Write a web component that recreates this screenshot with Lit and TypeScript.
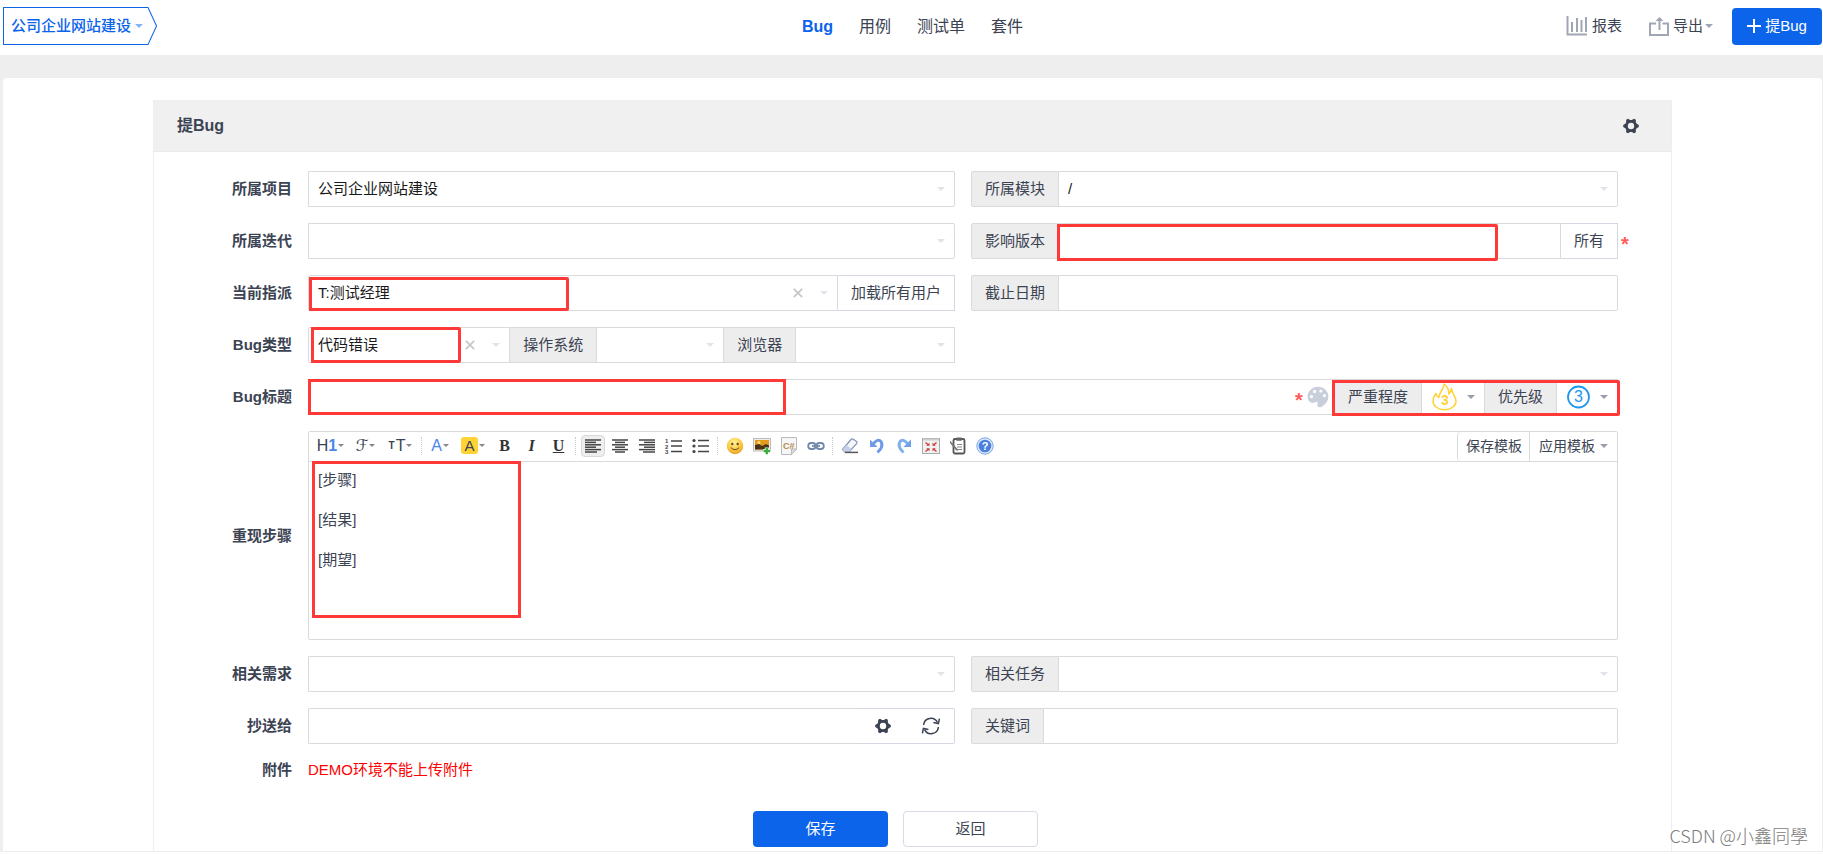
import { LitElement, html, css, svg } from "lit";
import { customElement } from "lit/decorators.js";

const gear = html`<svg class="ico" width="16" height="16" viewBox="0 0 16 16" aria-hidden="true">
  <circle cx="8" cy="8" r="4.6" fill="none" stroke="currentColor" stroke-width="2.8" />
  <g fill="currentColor">
    ${[0, 60, 120, 180, 240, 300].map(
      (a) => svg`<path d="M12 4.800 15.800 6.900V9.100L12 11.200Z" transform="rotate(${a} 8 8)"/>`
    )}
  </g>
</svg>`;

const refresh = html`<svg class="ico" width="20" height="18" viewBox="0 0 20 18" fill="none" stroke="currentColor" stroke-width="1.5" aria-hidden="true">
  <path d="M2.6 8A7.3 7.3 0 0 1 16.4 5.4M17.4 10A7.3 7.3 0 0 1 3.6 12.6" />
  <path d="M18.4 1.6 17.4 6.6 12.4 5.6M1.4 16.4 2.4 11.4 7.4 12.4" />
</svg>`;

const chart = html`<svg class="ico" width="22" height="20" viewBox="0 0 22 20" fill="none" stroke="#a0a6b3" stroke-width="2" aria-hidden="true">
  <path d="M1.5 0V18.5H21" /><path d="M6 6V16M11 2V16M15.500 4V16M20 1V16" />
</svg>`;

const share = html`<svg class="ico" width="20" height="20" viewBox="0 0 20 20" fill="none" stroke="#a0a6b3" stroke-width="2" aria-hidden="true">
  <path d="M7 7.500H1V19H19V7.500H13.500" /><path d="M10.500 14V2" /><path d="M6.500 5 10.500 1 14.500 5Z" fill="#a0a6b3" stroke="none" />
</svg>`;

const palette = html`<svg class="ico" width="22" height="22" viewBox="0 0 22 22" aria-hidden="true">
  <path fill="#c9cedb" d="M11 .8C5 .8.6 5.200.6 10.800c0 3.600 2.600 6.200 5.200 6.200 1.700 0 2.600-1.800 4.200-1.200 1.700.7-.6 3 .8 4.800.9 1.200 3 .9 5-.7 3.400-2.500 5.600-5.400 5.600-9.100C21.400 5.200 17 .8 11 .8z" />
  <g fill="#fff"><circle cx="4.500" cy="10.600" r="1.600" /><circle cx="7.600" cy="5.400" r="1.600" /><circle cx="13.800" cy="5" r="1.600" /><circle cx="17.400" cy="9.600" r="1.600" /></g>
</svg>`;

const flame = html`<svg class="badge" width="25" height="28" viewBox="0 0 25 28" fill="none" stroke="#ffd335" stroke-width="1.500" stroke-linejoin="round" aria-hidden="true">
  <path d="M4 10.500C1.800 13 1 15.500 1 18 1 23 6 26.800 12.500 26.800S24 23 24 18C24 13 20 11.500 19.500 5.500 18.800 8.500 18 9.800 16.800 11 17 7 15 3 12 1 12.500 6 7.500 8 6.800 14.500 5 13.500 4.200 12.500 4 10.500Z" />
</svg>`;
const ring = html`<svg class="badge" width="25" height="28" viewBox="0 0 25 28" aria-hidden="true">
  <circle cx="12.500" cy="14" r="10.500" fill="none" stroke="#2098ee" stroke-width="1.800" />
</svg>`;

const lines = (rows: number[][]) => html`<svg width="16" height="14" viewBox="0 0 16 14" stroke="#444" stroke-width="1.500" aria-hidden="true">
  ${rows.map(([a, b], i) => svg`<path d="M${a} ${1 + i * 2.4}H${b}"/>`)}
</svg>`;
const alignLeft = lines([[0, 16], [0, 11], [0, 16], [0, 11], [0, 16], [0, 12]]);
const alignCenter = lines([[0, 16], [3, 13], [0, 16], [3, 13], [0, 16], [3, 13]]);
const alignRight = lines([[0, 16], [5, 16], [0, 16], [5, 16], [0, 16], [4, 16]]);
const listOl = html`<svg width="17" height="16" viewBox="0 0 17 16" aria-hidden="true">
  <path d="M6 3H17M6 8H17M6 13.500H17" stroke="#444" stroke-width="1.600" />
  <g font-family="Liberation Sans" font-size="6" font-weight="700" fill="#444"><text x="0" y="5">1</text><text x="0" y="10.500">2</text><text x="0" y="16">3</text></g>
</svg>`;
const listUl = html`<svg width="17" height="16" viewBox="0 0 17 16" fill="#444" aria-hidden="true">
  <path d="M6 2.500H17M6 8H17M6 13.500H17" stroke="#444" stroke-width="1.600" />
  <circle cx="2" cy="2.500" r="1.600" /><circle cx="2" cy="8" r="1.600" /><circle cx="2" cy="13.500" r="1.600" />
</svg>`;
const smile = html`<svg width="18" height="18" viewBox="0 0 18 18" aria-hidden="true">
  <defs><radialGradient id="face" cx=".45" cy=".3" r=".75"><stop offset="0" stop-color="#fff3a0" /><stop offset=".6" stop-color="#fbc73c" /><stop offset="1" stop-color="#e0982a" /></radialGradient></defs>
  <circle cx="9" cy="9" r="8.200" fill="url(#face)" /><circle cx="6.300" cy="7" r="1.200" fill="#6b4a1a" /><circle cx="11.700" cy="7" r="1.200" fill="#6b4a1a" />
  <path d="M4.800 10.500q4.200 4.400 8.400 0" fill="none" stroke="#6b4a1a" />
</svg>`;
const picture = html`<svg width="18" height="18" viewBox="0 0 18 18" aria-hidden="true">
  <rect x=".5" y="1.500" width="17" height="12.500" fill="#eee" stroke="#bbb" /><rect x="2" y="3" width="14" height="9.500" fill="#e39a1d" />
  <path d="M2 12.500V8l4-1 3 2 4-2 3 1.500v4z" fill="#4a3417" /><circle cx="6" cy="5.600" r="1.500" fill="#ffe27a" />
  <path d="M13.800 10.500v7M10.300 14h7" stroke="#fff" stroke-width="4" /><path d="M13.800 10.800v6.400M10.600 14H17" stroke="#3cae3c" stroke-width="2.400" />
</svg>`;
const code = html`<svg width="18" height="18" viewBox="0 0 18 18" aria-hidden="true">
  <path d="M1.500.5h15v11.500l-5 5.500h-10z" fill="#f6f6f6" stroke="#bbb" /><path d="M16.500 12h-5v5.500z" fill="#ddd" stroke="#bbb" />
  <text x="3" y="12" font-family="Liberation Sans" font-size="9" font-weight="700" fill="#b98a4e">C#</text>
</svg>`;
const chain = html`<svg width="18" height="18" viewBox="0 0 18 18" fill="none" stroke="#7189ad" stroke-width="1.800" aria-hidden="true">
  <rect x="1.200" y="6" width="7.400" height="6" rx="3" /><rect x="9.400" y="6" width="7.400" height="6" rx="3" /><path d="M5 9h8" />
</svg>`;
const eraser = html`<svg width="18" height="18" viewBox="0 0 18 18" aria-hidden="true">
  <path d="M1.500 12.500 10 2.500q1-1 2.300-.3l3 2q1.400 1 .3 2.400L8 15H3.600z" fill="#f4f6fb" stroke="#7f93b5" stroke-width="1.200" />
  <path d="M1.500 12.500 5.500 8l5 4L8 15H3.600z" fill="#c4d1e8" /><path d="M4 15.400H17" stroke="#555" stroke-width="1.500" />
</svg>`;
const undo = html`<svg width="18" height="18" viewBox="0 0 18 18" aria-hidden="true">
  <path d="M5 7q5-6 8-2.500Q16 9.500 9.500 15.500" fill="none" stroke="#6f9be6" stroke-width="3" /><path d="M2 2.500V10h7.500z" fill="#6f9be6" />
</svg>`;
const redo = html`<svg width="18" height="18" viewBox="0 0 18 18" aria-hidden="true">
  <path d="M13 7q-5-6-8-2.500Q2 9.500 8.500 15.500" fill="none" stroke="#7fb0ee" stroke-width="3" /><path d="M16 2.500V10H8.500z" fill="#6fa2e6" />
</svg>`;
const full = html`<svg width="18" height="18" viewBox="0 0 18 18" aria-hidden="true">
  <rect x=".5" y="1.500" width="17" height="15" fill="#f1f1f1" stroke="#aaa" /><path d="M1 2.500H17" stroke="#ccc" stroke-width="2" />
  <path d="M3.500 5.500l3 2.500M14.500 5.500l-3 2.500M3.500 14.500l3-2.500M14.500 14.500l-3-2.500" stroke="#cf3b3b" stroke-width="1.400" />
  <path d="M7.500 5.800v3H4.200zM10.500 5.800v3h3.300zM7.500 14.200v-3H4.200zM10.500 14.200v-3h3.300z" fill="#cf3b3b" />
</svg>`;
const paste = html`<svg width="18" height="18" viewBox="0 0 18 18" aria-hidden="true">
  <rect x="4.500" y="2" width="11" height="14.500" rx="1.500" fill="#fff" stroke="#555" stroke-width="1.800" /><rect x="7" y=".5" width="6" height="3.200" rx="1" fill="#666" />
  <path d="M8 7.500h5M8 10h5M8 12.500h5" stroke="#888" /><path d="M1 3.500 8.500 12 9 14 7 13.200 1 6z" fill="#777" />
</svg>`;
const help = html`<svg width="18" height="18" viewBox="0 0 18 18" aria-hidden="true">
  <circle cx="9" cy="9" r="8.200" fill="#dbe7fb" stroke="#7fa5e6" /><circle cx="9" cy="9" r="6.300" fill="#4a7fdc" />
  <text x="5.700" y="13" font-family="Liberation Sans" font-size="11" font-weight="700" fill="#fff">?</text>
</svg>`;

@customElement("app-root")
export class AppRoot extends LitElement {
  static styles = css`
    :host {
      display: block;
      position: relative;
      overflow-x: hidden;
      font: 15px/20px "Liberation Sans", "Noto Sans CJK SC", sans-serif;
      color: #3c4353;
      background: #fff;
    }
    *, *::before, *::after { box-sizing: border-box; }
    svg { display: block; flex: none; }
    button, input, select, textarea {
      font: inherit; color: inherit; margin: 0; padding: 0; border: 0;
      background: none; border-radius: 0; outline: 0; min-width: 0;
    }
    a { color: inherit; text-decoration: none; }
    .caret {
      width: 0; height: 0; flex: none;
      border: 4px solid transparent; border-bottom: 0; border-top-color: currentColor;
    }
    .caret.small { border-width: 3px; border-bottom: 0; color: #888; }

    header {
      display: grid; grid-template-columns: 1fr auto 1fr; align-items: center;
      height: 55px; padding: 0 1px 3px 3px;
    }
    .project {
      position: relative; justify-self: start; display: flex; align-items: center; gap: 4px;
      height: 38px; padding: 0 14px 0 8px; color: #0c64eb; font-weight: 500;
    }
    .project .outline { position: absolute; inset: 0; width: 100%; height: 100%; }
    .project .label, .project .caret { position: relative; }
    .project .caret { color: #86b1f5; }
    nav { display: flex; gap: 26px; font-size: 16px; padding-top: 2px; }
    nav .active { color: #0c64eb; font-weight: 700; }
    .tools { display: flex; justify-content: flex-end; align-items: center; }
    .tools a { display: flex; align-items: center; gap: 4px; margin-right: 27px; }
    .tools .export { margin-right: 19px; }
    .tools .caret { color: #a0a6b3; margin-left: -2px; }
    .create {
      display: flex; align-items: center; justify-content: center; gap: 4px;
      width: 90px; height: 37px; background: #0c64eb; color: #fff; border-radius: 4px;
    }

    main { background: #eee; padding: 23px 1px 1px 3px; }
    .card { background: #fff; border-radius: 4px 4px 0 0; padding: 22px 150px 0; }
    .box { border: 1px solid #eee; border-bottom: 0; }
    .head {
      display: flex; align-items: center; justify-content: space-between; height: 51px;
      background: #f0f0f0; border-bottom: 1px solid #eaeaea; padding: 0 32px 0 23px;
    }
    h1 { margin: 0; font-size: 16px; font-weight: 700; }
    form {
      display: grid; grid-template-columns: 138px minmax(0, 1fr) minmax(0, 1fr); gap: 16px;
      padding: 19px 53px 4px 0; align-items: center;
    }
    .name { text-align: right; font-weight: 700; }
    .wide { grid-column: 2 / 4; }
    .group { position: relative; display: flex; height: 36px; }
    .blank { grid-column: 3; }
    .cell { position: relative; flex: 1 1 0; display: flex; min-width: 0; border: 1px solid #d9dadc; }
    .cell + .cell, .addon + .cell, .cell + .addon, .cell + .btn { border-left-width: 0; }
    .group > :first-child { border-radius: 2px 0 0 2px; }
    .group > :last-child { border-radius: 0 2px 2px 0; }
    .cell select, .cell input {
      width: 100%; padding: 0 9px; appearance: none; color: #1a1a1a;
    }
    .cell .caret { position: absolute; right: 9px; top: 15px; color: #e0e3e9; pointer-events: none; }
    .cell .clear {
      position: absolute; right: 32px; top: 7px; width: 14px; height: 20px;
      display: grid; place-items: center; color: #c8c8c8;
    }
    .cell.dark .caret { color: #9a9eaa; }
    .addon {
      display: flex; align-items: center; flex: none; padding: 0 13px; background: #ededed;
      border: 1px solid #d9dadc;
    }
    .btn { flex: none; padding: 0 13px; border: 1px solid #d3d7e2; }
    .iconbtn {
      flex: none; width: 48px; display: grid; place-items: center;
      border: 1px solid #d3d7e2; border-left: 0; border-right: 0;
    }
    .iconbtn:last-child { border-right: 1px solid #d3d7e2; }
    .open { border-right: 0; }
    .w-type { flex-grow: 202; }
    .w-os { flex-grow: 127; }
    .w-browser { flex-grow: 159; }
    .w-severity { flex: 0 0 63px; }
    .w-priority { flex: 0 0 61px; }
    .title { align-items: center; padding-right: 7px; gap: 4px; border-right: 0; }
    .star { color: #ff5d5d; font-size: 20px; font-weight: 700; line-height: 26px; height: 20px; }
    .star.out { position: absolute; left: 100%; top: 8px; margin-left: 3px; }
    .badge { position: absolute; top: 3px; left: 10px; pointer-events: none; }
    .w-priority .badge { left: 9px; }
    .cell .severity { padding: 6px 0 0 19px; font-weight: 700; font-size: 14px; color: #ffd335; }
    .cell .priority { padding-left: 17px; font-size: 16px; color: #2098ee; }

    .mark { position: absolute; border: 3px solid #ff3838; pointer-events: none; }
    .m-version { left: 86px; top: 1px; width: 441px; height: 37px; }
    .m-user { left: 1px; top: 2px; width: 260px; height: 34px; }
    .m-type { left: 3px; top: 0; width: 150px; height: 36px; }
    .m-title { left: 0; top: 0; width: 478px; height: 36px; }
    .m-level { right: -2px; top: 1px; width: 288px; height: 36px; }
    .m-steps { left: 3px; top: 29px; width: 209px; height: 157px; }

    .editor { position: relative; border: 1px solid #d9dadc; border-radius: 2px; }
    .toolbar { display: flex; height: 30px; padding-left: 4px; border-bottom: 1px solid #d9dadc; }
    .toolbar button { display: flex; align-items: center; justify-content: center; gap: 1px; flex: none; width: 27px; padding-bottom: 2px; }
    .toolbar .w35 { width: 35px; }
    .toolbar .w30 { width: 30px; }
    .toolbar .w36 { width: 36px; }
    .sep { width: 7px; flex: none; padding: 5px 3px 6px; }
    .sep::before { content: ""; display: block; height: 100%; border-left: 1px dotted #ccc; }
    .blue { color: #4c86ea; }
    .glyph { font-size: 16px; }
    .strong { font-weight: 700; }
    .script { font-family: "DejaVu Sans", "DejaVu Serif", serif; font-size: 16px; }
    .tiny { font-size: 10px; font-weight: 700; line-height: 24px; }
    .hl { background: #ffd335; border-radius: 3px; width: 17px; height: 17px; line-height: 17px; font-size: 15px; }
    .serif { font-family: "Liberation Serif", serif; font-weight: 700; font-size: 16px; color: #333; }
    .it { font-style: italic; }
    .un { text-decoration: underline; }
    .on { display: grid; place-items: center; width: 24px; height: 22px; background: #eee; border: 1px solid #d8d8d8; border-radius: 4px; }
    .templates { display: flex; margin-left: auto; font-size: 14px; }
    .toolbar .templates button { width: auto; padding: 0 7px 2px 8px; border-left: 1px solid #d9dadc; gap: 5px; }
    .toolbar .templates .save { border-radius: 4px 0 0 4px; }
    .toolbar .templates .apply { padding: 0 9px 2px 9px; }
    .templates .caret { color: #9a9eaa; }
    textarea { display: block; width: 100%; height: 177px; padding: 8px 9px; resize: none; }
    .danger { color: #f00; }
    .actions { grid-column: 1 / -1; display: flex; justify-content: center; gap: 15px; padding: 15px 0 0 19px; }
    .actions button { width: 135px; height: 36px; border-radius: 4px; }
    .primary { background: #0c64eb; color: #fff; }
    .actions .back { border: 1px solid #d8dbe5; }
    .watermark {
      position: absolute; right: 15px; bottom: 4px; font: 18px/26px "Noto Sans CJK SC", sans-serif;
      font-weight: 300; color: #7c7c7c; text-shadow: -1px -1px 0 #fff;
    }
  `;

  private pick(id: string, value = "", cls = "", clear = false, label = "") {
    return html`<div class="cell ${cls}">
      <select id=${id} aria-label=${label || id}><option>${value}</option></select>
      ${clear
        ? html`<button type="button" class="clear" aria-label="清除"><svg width="10" height="10" viewBox="0 0 10 10" stroke="currentColor" stroke-width="1.800"><path d="M.8.8 9.200 9.200M9.200.8.8 9.200" /></svg></button>`
        : ""}
      <span class="caret"></span>
    </div>`;
  }

  private tool(name: string, icon: unknown, cls = "") {
    return html`<button type="button" title=${name} class=${cls}>${icon}</button>`;
  }

  render() {
    const small = html`<span class="caret small"></span>`;
    return html`
      <header>
        <button class="project">
          <svg class="outline" viewBox="0 0 154 38" preserveAspectRatio="none" fill="#fff" stroke="#0c64eb"><path d="M.5.5H145L153.500 19 145 37.500H.5Z" /></svg>
          <span class="label">公司企业网站建设</span><span class="caret"></span>
        </button>
        <nav>
          <a class="active" href="#bug">Bug</a><a href="#case">用例</a><a href="#task">测试单</a><a href="#suite">套件</a>
        </nav>
        <div class="tools">
          <a href="#report">${chart}<span>报表</span></a>
          <a class="export" href="#export">${share}<span>导出</span><span class="caret"></span></a>
          <button class="create">
            <svg width="14" height="14" viewBox="0 0 14 14" stroke="#fff" stroke-width="2"><path d="M7 0V14M0 7H14" /></svg><span>提Bug</span>
          </button>
        </div>
      </header>
      <main>
        <div class="card">
          <section class="box">
            <div class="head"><h1>提Bug</h1><button aria-label="设置">${gear}</button></div>
            <form>
              <label class="name" for="product">所属项目</label>
              <div class="group">${this.pick("product", "公司企业网站建设", "", false, "所属项目")}</div>
              <div class="group"><label class="addon" for="module">所属模块</label>${this.pick("module", "/", "", false, "所属模块")}</div>

              <label class="name" for="sprint">所属迭代</label>
              <div class="group">${this.pick("sprint", "", "", false, "所属迭代")}</div>
              <div class="group">
                <label class="addon" for="version">影响版本</label>
                <div class="cell"><input id="version" /></div>
                <button type="button" class="btn">所有</button>
                <span class="star out">*</span><span class="mark m-version"></span>
              </div>

              <label class="name" for="assigned">当前指派</label>
              <div class="group">
                ${this.pick("assigned", "T:测试经理", "", true, "当前指派")}
                <button type="button" class="btn">加载所有用户</button><span class="mark m-user"></span>
              </div>
              <div class="group"><label class="addon" for="deadline">截止日期</label><div class="cell"><input id="deadline" /></div></div>

              <label class="name" for="type">Bug类型</label>
              <div class="group">
                ${this.pick("type", "代码错误", "w-type", true, "Bug类型")}
                <label class="addon" for="os">操作系统</label>${this.pick("os", "", "w-os", false, "操作系统")}
                <label class="addon" for="browser">浏览器</label>${this.pick("browser", "", "w-browser", false, "浏览器")}
                <span class="mark m-type"></span>
              </div>
              <span class="blank"></span>

              <label class="name" for="title">Bug标题</label>
              <div class="group wide">
                <div class="cell title"><input id="title" /><span class="star">*</span><button type="button" aria-label="颜色">${palette}</button></div>
                <label class="addon" for="severity">严重程度</label>
                <div class="cell dark w-severity">${flame}<select id="severity" class="severity"><option>3</option></select><span class="caret"></span></div>
                <label class="addon" for="priority">优先级</label>
                <div class="cell dark w-priority">${ring}<select id="priority" class="priority"><option>3</option></select><span class="caret"></span></div>
                <span class="mark m-title"></span><span class="mark m-level"></span>
              </div>

              <label class="name" for="steps">重现步骤</label>
              <div class="editor wide">
                <div class="toolbar">
                  ${this.tool("标题", html`<span class="glyph">H<span class="blue strong">1</span></span>${small}`, "w35")}
                  ${this.tool("字体", html`<span class="script">ℱ</span>${small}`, "w35")}
                  ${this.tool("字号", html`<span class="tiny">T</span><span class="glyph">T</span>${small}`, "w35")}
                  <span class="sep"></span>
                  ${this.tool("文字颜色", html`<span class="glyph blue">A</span>${small}`, "w30")}
                  ${this.tool("背景颜色", html`<span class="hl">A</span>${small}`, "w36")}
                  ${this.tool("粗体", html`<span class="serif">B</span>`)}
                  ${this.tool("斜体", html`<span class="serif it">I</span>`)}
                  ${this.tool("下划线", html`<span class="serif un">U</span>`)}
                  <span class="sep"></span>
                  ${this.tool("左对齐", html`<span class="on">${alignLeft}</span>`)}
                  ${this.tool("居中", alignCenter)} ${this.tool("右对齐", alignRight)}
                  ${this.tool("编号", listOl)} ${this.tool("项目符号", listUl)}
                  <span class="sep"></span>
                  ${this.tool("表情", smile)} ${this.tool("图片", picture)} ${this.tool("代码", code)} ${this.tool("链接", chain)}
                  <span class="sep"></span>
                  ${this.tool("清除格式", eraser)} ${this.tool("撤销", undo)} ${this.tool("重做", redo)}
                  ${this.tool("全屏", full)} ${this.tool("粘贴", paste)} ${this.tool("帮助", help)}
                  <div class="templates">
                    <button type="button" class="save">保存模板</button>
                    <button type="button" class="apply">应用模板<span class="caret"></span></button>
                  </div>
                </div>
                <textarea id="steps" .value=${"[步骤]\n\n[结果]\n\n[期望]"}></textarea>
                <span class="mark m-steps"></span>
              </div>

              <label class="name" for="story">相关需求</label>
              <div class="group">${this.pick("story", "", "", false, "相关需求")}</div>
              <div class="group"><label class="addon" for="related">相关任务</label>${this.pick("related", "", "", false, "相关任务")}</div>

              <label class="name" for="mailto">抄送给</label>
              <div class="group">
                <div class="cell open"><input id="mailto" /></div>
                <button type="button" class="iconbtn" aria-label="设置">${gear}</button>
                <button type="button" class="iconbtn" aria-label="刷新">${refresh}</button>
              </div>
              <div class="group"><label class="addon" for="keywords">关键词</label><div class="cell"><input id="keywords" /></div></div>

              <span class="name">附件</span>
              <span class="danger wide">DEMO环境不能上传附件</span>

              <div class="actions">
                <button type="button" class="primary">保存</button>
                <button type="button" class="back">返回</button>
              </div>
            </form>
          </section>
        </div>
      </main>
      <div class="watermark">CSDN @小鑫同學</div>
    `;
  }
}
